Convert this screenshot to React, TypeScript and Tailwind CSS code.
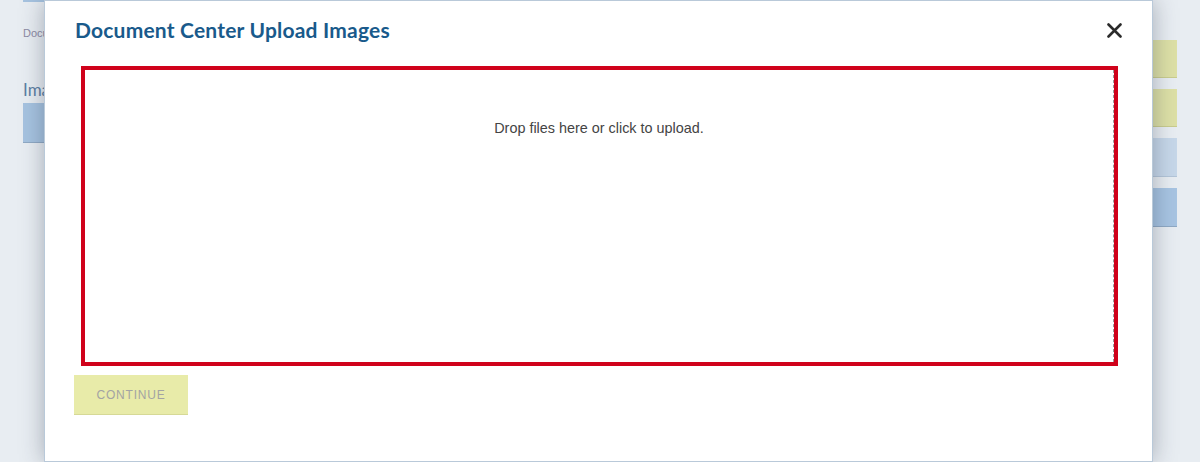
import React from "react";

export default function App() {
  return (
    <div className="relative h-[462px] w-[1200px] overflow-hidden bg-[#e8edf2] font-['Liberation_Sans',Arial,sans-serif]">
      {/* Page behind the modal */}
      <div className="flex justify-between px-[23px]">
        <div className="w-[300px]">
          <div className="h-[2px] bg-[#a6c3e0]" />
          <div className="mt-[23px] text-[11px] text-[#8c8aa3]">Document Center</div>
          <div className="mt-[35px] font-['Lato',sans-serif] text-[17px] text-[#5d7fa3]">Images</div>
          <div className="mt-[1px] h-[40px] border-b border-[#8fa9c4] bg-[#a6c3e0]" />
        </div>
        <div className="mt-[40px] flex w-[200px] flex-col gap-[11px]">
          <div className="h-[38px] border-b border-[#c9cc8e] bg-[#dde0a6]" />
          <div className="h-[38px] border-b border-[#c9cc8e] bg-[#dde0a6]" />
          <div className="h-[39px] border-b border-[#b3c5d8] bg-[#c6d7e9]" />
          <div className="h-[39px] border-b border-[#8fa9c4] bg-[#a7c4e2]" />
        </div>
      </div>

      {/* Modal */}
      <div className="absolute left-[44px] top-0 flex h-[462px] w-[1109px] flex-col border border-[#b9c9d9] bg-white shadow-[0_0_22px_rgba(40,50,70,0.35)]">
        <div className="flex h-[58px] items-center justify-between pl-[30px] pr-[28px]">
          <h2 className="font-['Lato',sans-serif] text-[21px] font-bold tracking-[0.2px] text-[#195a8b]">
            Document Center Upload Images
          </h2>
          <button className="flex h-[20px] w-[20px] items-center justify-center text-[#2b2b2b]">
            <svg width="15" height="15" viewBox="0 0 15 15" fill="none">
              <path d="M1.5 1.5 L13.5 13.5 M13.5 1.5 L1.5 13.5" stroke="currentColor" strokeWidth="2.6" strokeLinecap="round" />
            </svg>
          </button>
        </div>

        <div className="ml-[36px] mr-[34px] mt-[7px] h-[300px] border-4 border-[#d0021b]">
          <div className="flex h-full justify-center border-r border-dashed border-[#9a9a9a] pt-[48px]">
            <span className="text-[14.4px] text-[#444444]">Drop files here or click to upload.</span>
          </div>
        </div>

        <div className="pl-[29px] pt-[9px]">
          <button className="h-[40px] w-[114px] border-b border-[#d6d996] bg-[#e8eba9] text-[12px] tracking-[0.8px] text-[#a3a3a3]">
            CONTINUE
          </button>
        </div>
      </div>
    </div>
  );
}
